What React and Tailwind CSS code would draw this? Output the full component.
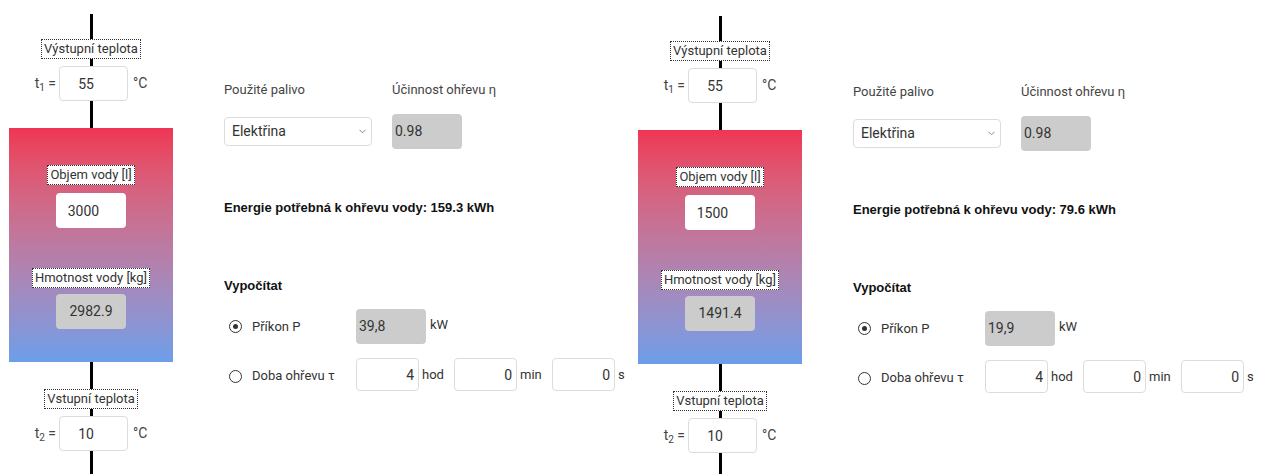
import React from "react";

const font = { fontFamily: "Roboto, 'Liberation Sans', Arial, sans-serif" };

function Tag({ children }) {
  return (
    <div className="shrink-0 h-[20px] px-[2px] border border-dotted border-[#333] bg-white text-[13px] leading-[18px] text-[#333] whitespace-nowrap">
      {children}
    </div>
  );
}

function Line({ h }) {
  return <div className="shrink-0 w-[3px] bg-black" style={{ height: h }} />;
}

function TempRow({ sub, value }) {
  return (
    <div className="shrink-0 grid grid-cols-[50px_69px_45px] items-center w-[164px] h-[35px]">
      <div className="justify-self-end pr-[3px] text-[14px] text-[#444] whitespace-nowrap">
        t<sub className="text-[10px]">{sub}</sub> =
      </div>
      <input
        readOnly
        value={value}
        className="w-[69px] h-[35px] rounded-[4px] border border-[#dcdcdc] bg-white text-center pr-[15px] text-[14px] text-[#333] outline-none"
      />
      <div className="pl-[5px] text-[14px] text-[#444]">°C</div>
    </div>
  );
}

function Radio({ checked }) {
  return (
    <div className="shrink-0 w-[13px] h-[13px] rounded-full border border-[#333] flex items-center justify-center bg-white">
      {checked && <div className="w-[5px] h-[5px] rounded-full bg-[#333]" />}
    </div>
  );
}

function TimeInput({ value, unit }) {
  return (
    <div className="flex items-center shrink-0">
      <input
        readOnly
        value={value}
        className="w-[63px] h-[33px] rounded-[4px] border border-[#dcdcdc] bg-white text-right pr-[4px] text-[14px] text-[#333] outline-none"
      />
      <span className="pl-[3px] pr-[2px] text-[13px] text-[#333] w-[35px]">{unit}</span>
    </div>
  );
}

function Panel({ vol, mass, energy, power, shift }) {
  return (
    <div className="w-[629px] shrink-0 flex items-start pl-[9px]" style={{ paddingTop: shift }}>
      {/* tank column */}
      <div className="w-[164px] shrink-0 flex flex-col items-center pt-[14px]">
        <Line h={25} />
        <Tag>Výstupní teplota</Tag>
        <Line h={7} />
        <TempRow sub="1" value="55" />
        <Line h={27} />
        <div className="w-[164px] h-[234px] shrink-0 bg-gradient-to-b from-[#ef3454] to-[#6b9eea] flex flex-col items-center pt-[37px]">
          <Tag>Objem vody [l]</Tag>
          <input
            readOnly
            value={vol}
            className="shrink-0 mt-[8px] w-[70px] h-[35px] rounded-[4px] bg-white text-center pr-[15px] text-[14px] text-[#333] outline-none"
          />
          <div className="mt-[40px] shrink-0">
            <Tag>Hmotnost vody [kg]</Tag>
          </div>
          <div className="shrink-0 mt-[6px] w-[70px] h-[35px] rounded-[4px] bg-[#cccccc] flex items-center justify-center text-[14px] text-[#333]">
            {mass}
          </div>
        </div>
        <Line h={27} />
        <Tag>Vstupní teplota</Tag>
        <Line h={7} />
        <TempRow sub="2" value="10" />
        <Line h={40} />
      </div>

      {/* form column */}
      <div className="shrink-0 ml-[51px] pt-[82px] flex flex-col text-[#333]">
        <div className="flex gap-[20px]">
          <div className="w-[148px] flex flex-col">
            <div className="text-[13px] leading-[15px] text-[#444]">Použité palivo</div>
            <div className="mt-[17px] h-[35px] flex items-center">
              <div className="relative w-[148px] h-[29px]">
                <select className="appearance-none w-full h-full rounded-[4px] border border-[#dcdcdc] bg-white pl-[7px] text-[14px] text-[#333] outline-none">
                  <option>Elektřina</option>
                </select>
                <svg
                  className="absolute right-[6px] top-[12px] pointer-events-none"
                  width="7"
                  height="5"
                  viewBox="0 0 7 5"
                >
                  <path d="M0.5 0.8 L3.5 3.8 L6.5 0.8" fill="none" stroke="#888" strokeWidth="1" />
                </svg>
              </div>
            </div>
          </div>
          <div className="flex flex-col">
            <div className="text-[13px] leading-[15px] text-[#444] whitespace-nowrap">Účinnost ohřevu η</div>
            <div className="mt-[17px] w-[70px] h-[35px] rounded-[4px] bg-[#cccccc] flex items-center pl-[3px] text-[14px] text-[#333]">
              0.98
            </div>
          </div>
        </div>

        <div className="mt-[51px] text-[13px] leading-[15px] font-bold text-[#111] whitespace-nowrap font-['Liberation_Sans',Arial,sans-serif]">
          Energie potřebná k ohřevu vody: {energy} kWh
        </div>

        <div className="mt-[63px] text-[13px] leading-[15px] font-bold text-[#111] font-['Liberation_Sans',Arial,sans-serif]">
          Vypočítat
        </div>

        <div className="mt-[16px] flex items-center h-[35px]">
          <div className="w-[132px] shrink-0 flex items-center pl-[5px]">
            <Radio checked />
            <span className="ml-[10px] text-[13px] text-[#333]">Příkon P</span>
          </div>
          <div className="shrink-0 w-[70px] h-[35px] rounded-[4px] bg-[#cccccc] flex items-center pl-[3px] text-[14px] text-[#333]">
            {power}
          </div>
          <span className="ml-[4px] -mt-[4px] text-[13px] text-[#333]">kW</span>
        </div>

        <div className="mt-[14px] flex items-center h-[33px]">
          <div className="w-[132px] shrink-0 flex items-center pl-[5px] pt-[3px]">
            <Radio />
            <span className="ml-[10px] text-[13px] text-[#333] whitespace-nowrap">Doba ohřevu τ</span>
          </div>
          <TimeInput value="4" unit="hod" />
          <TimeInput value="0" unit="min" />
          <TimeInput value="0" unit="s" />
        </div>
      </div>
    </div>
  );
}

export default function App() {
  return (
    <div className="w-[1263px] h-[474px] bg-white flex items-start overflow-hidden" style={font}>
      <Panel vol="3000" mass="2982.9" energy="159.3" power="39,8" shift={0} />
      <Panel vol="1500" mass="1491.4" energy="79.6" power="19,9" shift={2} />
    </div>
  );
}
